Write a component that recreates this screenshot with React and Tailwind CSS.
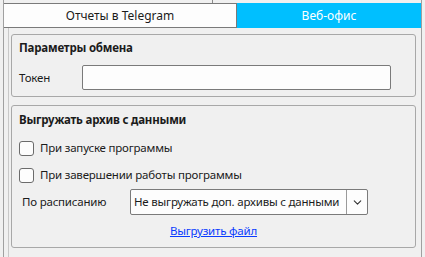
import { ChevronDown } from "lucide-react";

function Checkbox({ label }) {
  return (
    <label className="flex items-center h-[16px] gap-[6px]">
      <span className="w-[15px] h-[15px] bg-[#fdfdfd] border border-[#6b6b6b] rounded-[3px]" />
      <span>{label}</span>
    </label>
  );
}

export default function App() {
  return (
    <div className="w-[425px] h-[257px] bg-[#f0f0f0] text-[11.5px] tracking-[-0.2px] text-[#1b1b1b] font-['Noto_Sans',sans-serif] overflow-hidden">
      <div className="ml-[3px] w-[419px] h-full flex flex-col border-l border-r border-[#a0a0a0]">
        {/* strip above tabs */}
        <div className="h-[3px] flex">
          <div className="w-[209px] border-r border-[#8a8a8a]" />
        </div>

        {/* Tabs */}
        <div className="h-[25px] flex text-[12px] tracking-normal">
          <div className="w-[233px] bg-[#fdfdfd] border-t border-r border-b border-[#7a7a7a] flex items-center justify-center">
            Отчеты в Telegram
          </div>
          <div className="flex-1 bg-[#00bfff] text-white flex items-center justify-center">
            Веб-офис
          </div>
        </div>

        {/* Page */}
        <div className="flex-1 pl-[4px]">
          <div className="h-full border-l border-[#c8c8c8] pl-[2px] pr-[5px] pt-[6px] flex flex-col gap-[8px]">
            {/* Fieldset 1 */}
            <div className="h-[63px] border border-[#a8a8a8] rounded-[3px] px-[7px] pt-[5px]">
              <div className="h-[16px] leading-[16px] font-bold">Параметры обмена</div>
              <div className="mt-[9px] flex items-center">
                <div className="w-[63px]">Токен</div>
                <div className="w-[309px] h-[25px] bg-[#fdfdfd] border border-[#7a7a7a] rounded-[2px]" />
              </div>
            </div>

            {/* Fieldset 2 */}
            <div className="h-[143px] border border-[#a8a8a8] rounded-[3px] px-[7px] pt-[6px]">
              <div className="h-[16px] leading-[16px] font-bold">Выгружать архив с данными</div>
              <div className="mt-[12px]">
                <Checkbox label="При запуске программы" />
              </div>
              <div className="mt-[11px]">
                <Checkbox label="При завершении работы программы" />
              </div>
              <div className="mt-[6px] flex items-center pl-[3px]">
                <div className="w-[108px]">По расписанию</div>
                <div className="w-[238px] h-[26px] bg-[#fdfdfd] border border-[#7a7a7a] rounded-[2px] flex items-center">
                  <div className="flex-1 pl-[3px] whitespace-nowrap overflow-hidden">
                    Не выгружать доп. архивы с данными
                  </div>
                  <div className="w-[21px] h-full border-l border-[#9a9a9a] flex items-center justify-center">
                    <ChevronDown size={13} strokeWidth={2} className="text-[#333]" />
                  </div>
                </div>
              </div>
              <div className="mt-[8px] h-[16px] leading-[16px] text-center">
                <a href="#" className="text-[#0a3cff] underline">Выгрузить файл</a>
              </div>
            </div>
          </div>
        </div>
      </div>
    </div>
  );
}
